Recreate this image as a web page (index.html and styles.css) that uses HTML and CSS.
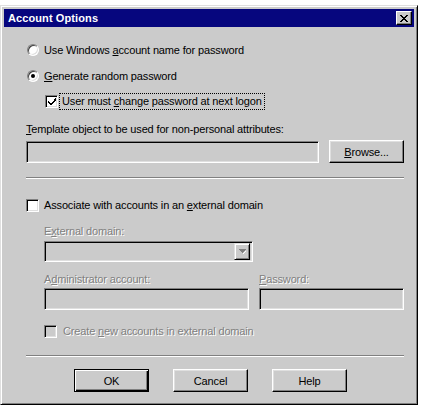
FILE: index.html
```html
<!DOCTYPE html>
<html>
<head>
<meta charset="utf-8">
<link rel="stylesheet" href="styles.css">
</head>
<body>
<div class="window">
  <div class="titlebar">
    <span class="title">Account Options</span>
    <span class="close"><svg width="8" height="7" viewBox="0 0 8 7" shape-rendering="crispEdges"><path fill="#000" d="M0 0h2v1h-2zM6 0h2v1h-2zM1 1h2v1h-2zM5 1h2v1h-2zM2 2h4v1h-4zM3 3h2v1h-2zM2 4h4v1h-4zM1 5h2v1h-2zM5 5h2v1h-2zM0 6h2v1h-2zM6 6h2v1h-2z"/></svg></span>
  </div>
  <div class="body">
    <div class="row r1"><span class="radio"></span><span class="txt">Use Windows <u>a</u>ccount name for password</span></div>
    <div class="row r2"><span class="radio checked"></span><span class="txt"><u>G</u>enerate random password</span></div>
    <div class="row r3"><span class="check"><svg width="9" height="9" viewBox="0 0 9 9" shape-rendering="crispEdges"><path fill="#000" d="M7 1h1v1h-1zM6 2h2v1h-2zM0 3h1v1h-1zM5 3h2v1h-2zM0 4h2v1h-2zM4 4h2v1h-2zM1 5h4v1h-4zM2 6h2v1h-2zM6 1h1v3h-1zM7 0h1v3h-1z"/></svg></span><span class="focus">User must <u>c</u>hange password at next logon</span></div>
    <div class="label l-template"><u>T</u>emplate object to be used for non-personal attributes:</div>
    <div class="field-row">
      <div class="field f-template"></div>
      <div class="btn b-browse"><u>B</u>rowse...</div>
    </div>
    <div class="sep s1"></div>
    <div class="row r-assoc"><span class="check white"></span><span class="txt t-assoc">Associate with accounts in an <u>e</u>xternal domain</span></div>
    <div class="indent">
      <div class="label dis l-ext">E<u>x</u>ternal domain:</div>
      <div class="field combo"><span class="drop"><svg width="7" height="5" viewBox="0 0 7 5" shape-rendering="crispEdges"><path fill="#fff" d="M1 1h7v1h-1v1h-1v1h-1v1h-1v-1h1v-1h1v-1h1v-1z"/><path fill="#808080" d="M0 0h7v1h-1v1h-1v1h-1v1h-1v-1h-1v-1h-1v-1h-1z"/></svg></span></div>
      <div class="pair-labels">
        <div class="label dis l-admin">A<u>d</u>ministrator account:</div>
        <div class="label dis l-pass"><u>P</u>assword:</div>
      </div>
      <div class="pair-fields">
        <div class="field f-admin"></div>
        <div class="field f-pass"></div>
      </div>
      <div class="row r-create"><span class="check"></span><span class="txt dis t-create">Create <u>n</u>ew accounts in external domain</span></div>
    </div>
    <div class="sep s2"></div>
    <div class="buttons">
      <div class="btn default">OK</div>
      <div class="btn">Cancel</div>
      <div class="btn">Help</div>
    </div>
  </div>
</div>
</body>
</html>
```

FILE: styles.css
```css
html, body {
  margin: 0;
  padding: 0;
  background: #fff;
}
.window {
  width: 418px;
  height: 400px;
  margin-top: 5px;
  box-sizing: border-box;
  background: #cbcbcb;
  border: 1px solid;
  border-color: #dfdfdf #000 #000 #dfdfdf;
  box-shadow: inset 1px 1px #fff, inset -1px -1px #808080;
  padding: 3px;
  display: flex;
  flex-direction: column;
}
.titlebar {
  height: 18px;
  flex: none;
  background: #06067e;
  display: flex;
  align-items: center;
  justify-content: space-between;
  padding: 0 2px 0 4px;
  color: #fff;
  font: bold 11px "Liberation Sans", Arial, sans-serif;
  letter-spacing: 0.1px;
}
.close {
  width: 16px;
  height: 14px;
  box-sizing: border-box;
  background: #cbcbcb;
  border: 1px solid;
  border-color: #fff #000 #000 #fff;
  box-shadow: inset -1px -1px #808080;
  display: flex;
  align-items: center;
  justify-content: center;
}
.close svg { display: block; }
.body {
  flex: 1;
  padding: 0 10px 0 22px;
  font: 11px "Liberation Sans", Arial, sans-serif;
  letter-spacing: -0.15px;
  color: #000;
}
u { text-decoration: underline; text-underline-offset: 1px; }
.row {
  display: flex;
  align-items: center;
}
.r1 { margin-top: 15px; height: 16px; }
.r2 { margin-top: 10px; height: 16px; }
.r3 { margin-top: 9px; height: 17px; padding-left: 19px; }
.radio {
  position: relative;
  width: 12px;
  height: 12px;
  box-sizing: border-box;
  margin-left: 1px;
  margin-right: 5px;
  border-radius: 50%;
  background: #fff;
  border: 1px solid;
  border-color: #808080 #fff #fff #808080;
  box-shadow: inset 1px 1px #404040, inset -1px -1px #dfdfdf;
}
.radio.checked::after {
  content: "";
  position: absolute;
  left: 3px;
  top: 3px;
  width: 4px;
  height: 4px;
  border-radius: 50%;
  background: #000;
}
.check {
  width: 13px;
  height: 13px;
  box-sizing: border-box;
  flex: none;
  background: #cbcbcb;
  border: 1px solid;
  border-color: #808080 #fff #fff #808080;
  box-shadow: inset 1px 1px #000, inset -1px -1px #dfdfdf;
  display: flex;
  align-items: center;
  justify-content: center;
}
.r3 .check { background: #fff; }
.check.white { background: #fff; }
.check svg { display: block; margin-left: 1px; margin-top: 1px; }
.focus {
  margin-left: 1px;
  padding: 0 2px;
  height: 17px;
  line-height: 15px;
  box-sizing: border-box;
  border: 1px dotted #000;
}
.label {
  height: 14px;
  line-height: 14px;
  white-space: nowrap;
}
.l-template { margin-top: 12px; }
.field-row {
  margin-top: 4px;
  height: 23px;
  display: flex;
  justify-content: space-between;
}
.field {
  box-sizing: border-box;
  background: #cbcbcb;
  border: 1px solid;
  border-color: #808080 #fff #fff #808080;
  box-shadow: inset 1px 1px #000, inset -1px -1px #dfdfdf;
}
.f-template { width: 293px; height: 22px; margin-top: 1px; }
.btn {
  width: 75px;
  height: 23px;
  box-sizing: border-box;
  background: #cbcbcb;
  border: 1px solid;
  border-color: #fff #000 #000 #fff;
  box-shadow: inset -1px -1px #808080, inset 1px 1px #dfdfdf;
  display: flex;
  align-items: center;
  justify-content: center;
  line-height: 14px;
}
.btn.default {
  border: 1px solid #000;
  box-shadow: inset 1px 1px #fff, inset -1px -1px #000, inset -2px -2px #808080;
}
.sep {
  height: 2px;
  border-top: 1px solid #808080;
  border-bottom: 1px solid #fff;
  box-sizing: border-box;
}
.s1 { margin-top: 14px; }
.r-assoc { margin-top: 18px; height: 16px; }
.t-assoc { margin-left: 5px; }
.indent { padding-left: 18px; }
.dis { color: #808080; text-shadow: 1px 1px 0 #fff; }
.l-ext { margin-top: 11px; }
.combo {
  margin-top: 3px;
  width: 209px;
  height: 21px;
  display: flex;
  justify-content: flex-end;
  align-items: center;
  padding: 2px;
}
.drop {
  width: 16px;
  height: 17px;
  box-sizing: border-box;
  background: #cbcbcb;
  border: 1px solid;
  border-color: #dfdfdf #000 #000 #dfdfdf;
  box-shadow: inset 1px 1px #fff, inset -1px -1px #808080;
  display: flex;
  align-items: center;
  justify-content: center;
}
.drop svg { display: block; }
.pair-labels {
  margin-top: 10px;
  display: flex;
}
.l-admin { width: 215px; }
.pair-fields {
  margin-top: 2px;
  display: flex;
  gap: 10px;
}
.f-admin { width: 205px; height: 22px; }
.f-pass { width: 145px; height: 22px; }
.r-create { margin-top: 13px; height: 16px; }
.t-create { margin-left: 6px; }
.s2 { margin-top: 16px; }
.buttons {
  margin-top: 12px;
  padding-left: 48px;
  display: flex;
  gap: 24px;
}
```
